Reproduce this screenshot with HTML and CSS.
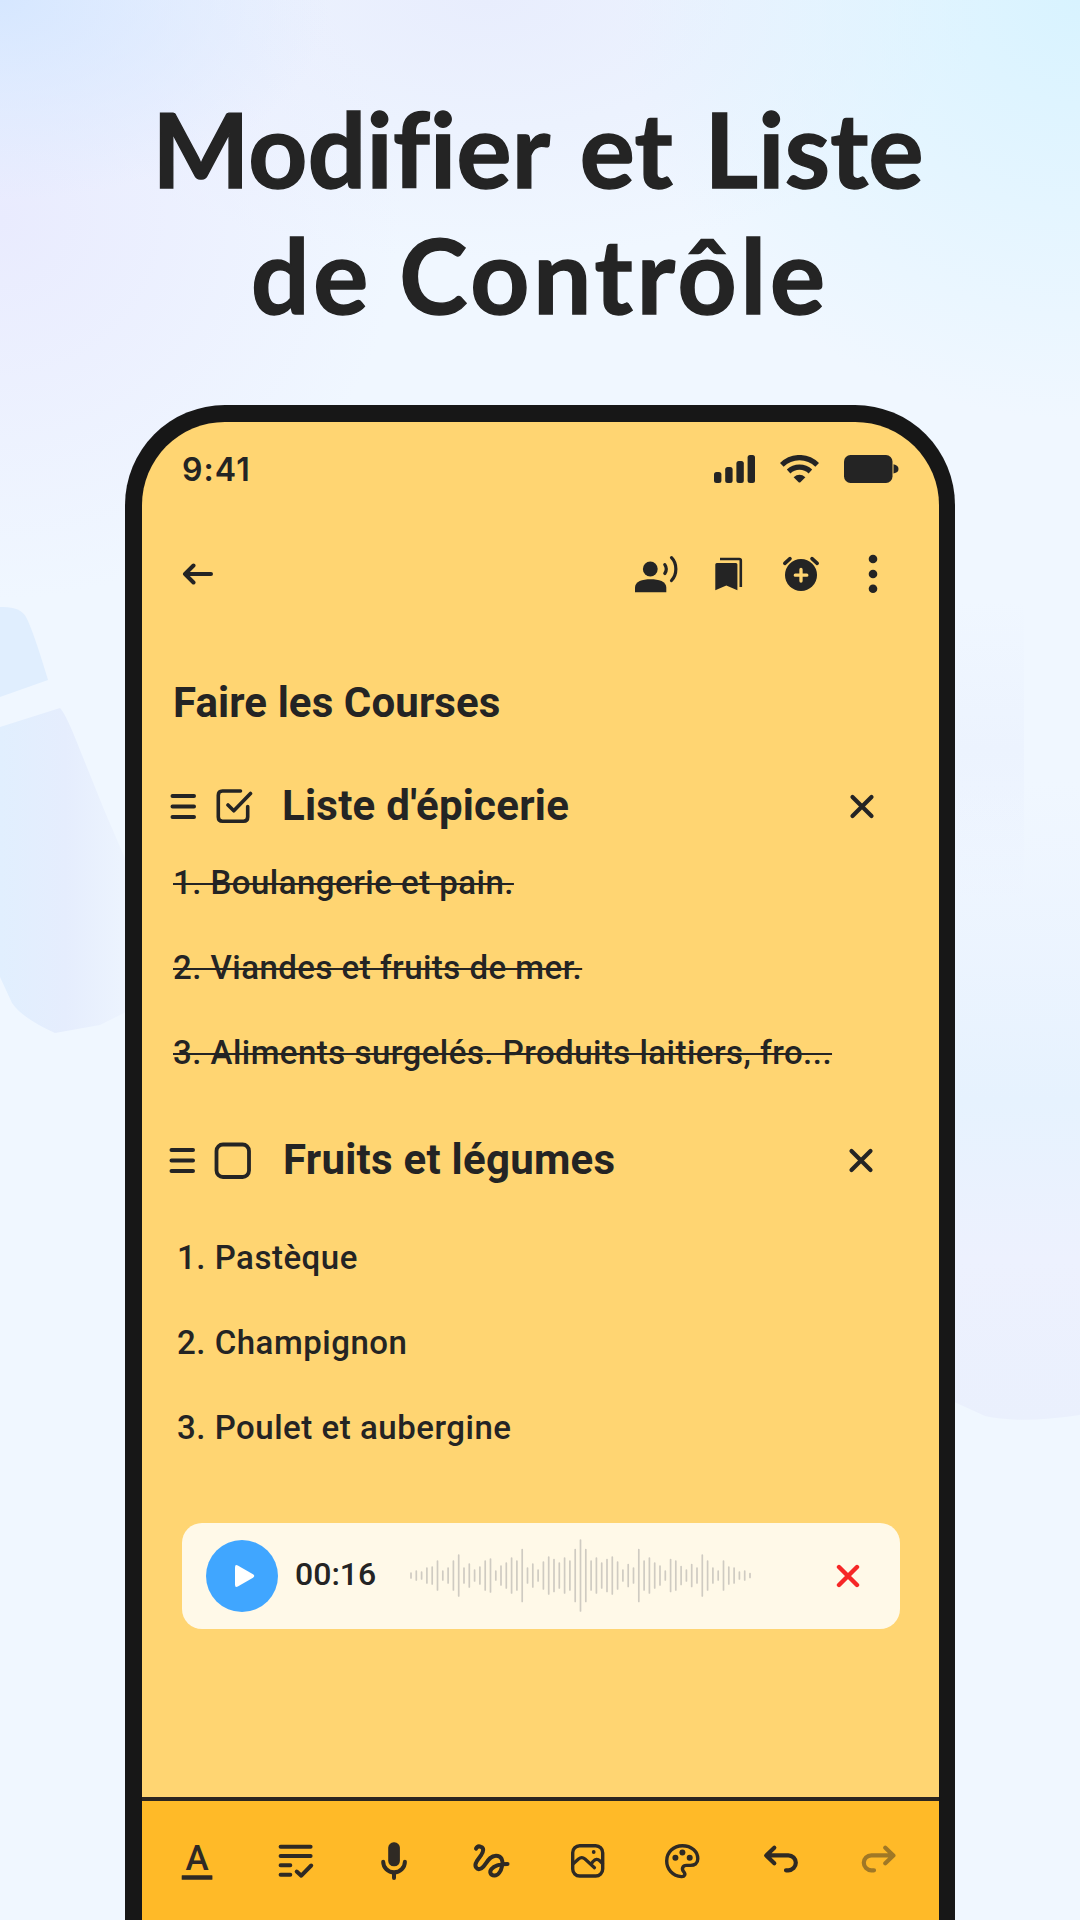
FILE: index.html
```
<!DOCTYPE html>
<html lang="fr">
<head>
  <meta charset="utf-8">
  <title>Modifier et Liste de Contrôle</title>
  <link rel="stylesheet" href="styles.css">
</head>
<body>

<div class="page">
  <svg class="backdrop" viewBox="0 0 1080 1920">
    <defs>
      <linearGradient id="fade-left" x1="0" y1="0" x2="1" y2="0">
        <stop offset="0" stop-color="#e1effe"/>
        <stop offset="0.5" stop-color="#e5edfd"/>
        <stop offset="1" stop-color="#edf4fe"/>
      </linearGradient>
      <linearGradient id="fade-right" x1="0" y1="0" x2="0" y2="1">
        <stop offset="0" stop-color="#eaf1fe" stop-opacity="0"/>
        <stop offset="0.5" stop-color="#e6f2fe"/>
        <stop offset="0.75" stop-color="#edf1fe"/>
        <stop offset="1" stop-color="#eaf0fd"/>
      </linearGradient>
      <linearGradient id="fade-edge" x1="0" y1="0" x2="0" y2="1">
        <stop offset="0" stop-color="#ecf3fe" stop-opacity="0"/>
        <stop offset="0.5" stop-color="#ecf3fe"/>
        <stop offset="1" stop-color="#ecf3fe" stop-opacity="0"/>
      </linearGradient>
    </defs>
    <path fill="#e0eefe" d="M0 607Q20 606 26 617Q33 630 48 680L0 697Z"/>
    <path fill="url(#fade-left)" d="M0 727L60 708Q66 714 80 750L105 812L130 870V1010L100 1025L55 1033Q22 1018 12 1003L0 977Z"/>
    <path fill="url(#fade-edge)" d="M950 600H1024V900H950Z"/>
    <path fill="url(#fade-right)" d="M950 780H1080V1415Q1020 1424 985 1416L950 1400Z"/>
  </svg>

  <h1 class="headline">
    <span class="headline-first">Modifier et Liste</span>
    <span class="headline-second">de Contrôle</span>
  </h1>

  <div class="phone">
    <div class="status-bar">
      <span class="clock">9:41</span>
      <div class="status-icons">
        <svg width="41" height="28" viewBox="0 0 41 28">
          <rect x="0" y="17" width="7.4" height="11" rx="2.5"/>
          <rect x="11.2" y="12" width="7.4" height="16" rx="2.5"/>
          <rect x="22.4" y="6" width="7.4" height="22" rx="2.5"/>
          <rect x="33.6" y="0" width="7.4" height="28" rx="2.5"/>
        </svg>
        <svg width="39" height="28" viewBox="0 0 39 28">
          <path class="line" stroke-width="5.2" d="M1.8 9.9A25 25 0 0 1 37.2 9.9M8.6 16.5A15.8 15.8 0 0 1 30.4 16.5"/>
          <path d="M13.6 22.3Q19.5 17.4 25.4 22.3L20.4 27.2Q19.5 28 18.6 27.2Z"/>
        </svg>
        <svg width="55" height="28" viewBox="0 0 55 28">
          <rect width="48.5" height="28" rx="6.5"/>
          <path d="M49.5 9.3Q54.5 10.3 54.5 14T49.5 18.4Z"/>
        </svg>
      </div>
    </div>

    <div class="toolbar">
      <svg width="32" height="22" viewBox="0 0 32 22">
        <path class="line round" stroke-width="4" d="M29 11H3M11.5 2.5L3 11L11.5 19.5"/>
      </svg>
      <div class="toolbar-actions">
        <svg width="48" height="48" viewBox="0 0 48 48">
          <circle cx="17.3" cy="19" r="7.4"/>
          <path d="M2 42.3V37.5C2 31.5 9.3 29.3 17.6 29.3S33.3 31.5 33.3 37.5V42.3Z"/>
          <path class="line round" stroke-width="3.2" d="M31.8 14.6Q34.8 19 31.8 23.5M38.5 7.7C44.3 13.5 44.3 24.5 38.5 30.5"/>
        </svg>
        <svg width="48" height="48" viewBox="0 0 48 48">
          <path d="M10.3 14.5Q10.3 13 11.8 13H30.9Q32.4 13 32.4 14.5V40.2L21.3 35.4L10.3 40.2Z"/>
          <path class="line" stroke-width="2.6" d="M15 9H34.3Q35.8 9 35.8 10.5V37"/>
        </svg>
        <svg width="48" height="48" viewBox="0 0 48 48">
          <circle cx="24" cy="25" r="16"/>
          <path class="line round" stroke-width="3.6" d="M7.8 13.3L13 8.6M40.2 13.3L35 8.6"/>
          <path class="plus" d="M24 19.5V31M18.3 25.2H29.8"/>
        </svg>
        <svg width="48" height="48" viewBox="0 0 48 48">
          <circle cx="24" cy="9" r="4.3"/>
          <circle cx="24" cy="24" r="4.3"/>
          <circle cx="24" cy="38.8" r="4.3"/>
        </svg>
      </div>
    </div>

    <div class="note">
      <h2 class="note-title">Faire les Courses</h2>

      <div class="section-head">
        <svg width="27" height="28" viewBox="0 0 27 28">
          <path class="line round" stroke-width="4" d="M2.5 4H24M2.5 14.5H24M2.5 25H24"/>
        </svg>
        <svg class="checkbox" width="38" height="38" viewBox="0 0 38 38">
          <path class="line round" stroke-width="3.6" d="M25.5 4H7.5Q3.3 4 3.3 8.2V30Q3.3 34.2 7.5 34.2H28.5Q32.7 34.2 32.7 30V19.5"/>
          <path class="line round" stroke-width="3.6" d="M13 18L18.8 23.8L35.5 6.5"/>
        </svg>
        <h3>Liste d'épicerie</h3>
        <svg class="close" width="26" height="26" viewBox="0 0 26 26">
          <path class="line round" stroke-width="4.2" d="M3.5 4L22.5 23M22.5 4L3.5 23"/>
        </svg>
      </div>
      <ul class="items done">
        <li><span>1. Boulangerie et pain.</span></li>
        <li><span>2. Viandes et fruits de mer.</span></li>
        <li><span>3. Aliments surgelés. Produits laitiers, fro...</span></li>
      </ul>

      <div class="section-head second">
        <svg width="27" height="28" viewBox="0 0 27 28">
          <path class="line round" stroke-width="4" d="M2.5 4H24M2.5 14.5H24M2.5 25H24"/>
        </svg>
        <svg class="checkbox" width="38" height="38" viewBox="0 0 38 38">
          <rect class="line" stroke-width="3.8" x="2.5" y="3.5" width="32.5" height="32.5" rx="6.500"/>
        </svg>
        <h3>Fruits et légumes</h3>
        <svg class="close" width="26" height="26" viewBox="0 0 26 26">
          <path class="line round" stroke-width="4.2" d="M3.5 4L22.5 23M22.5 4L3.5 23"/>
        </svg>
      </div>
      <ul class="items todo">
        <li>1. Pastèque</li>
        <li>2. Champignon</li>
        <li>3. Poulet et aubergine</li>
      </ul>
    </div>

    <div class="audio">
      <div class="play">
        <svg width="24" height="24" viewBox="0 0 24 24">
          <path d="M2 3.2Q2 0 4.8 1.5L20 10.3Q22.5 12 20 13.7L4.8 22.5Q2 24 2 20.8Z"/>
        </svg>
      </div>
      <span class="time">00:16</span>
      <svg class="wave" width="344" height="74" viewBox="0 0 344 74"><path id="wave"/></svg>
      <svg class="remove" width="24" height="24" viewBox="0 0 24 24">
        <path d="M3 3L21 21M21 3L3 21"/>
      </svg>
    </div>

    <div class="bottom-bar">
      <!-- text format -->
      <svg width="48" height="48" viewBox="0 0 48 48">
        <text class="format-letter" x="24" y="33" text-anchor="middle">A</text>
        <rect x="8.7" y="38.3" width="30.7" height="4.5" rx="0.5"/>
      </svg>
      <!-- checklist -->
      <svg width="48" height="48" viewBox="0 0 48 48">
        <path class="line round" stroke-width="4" d="M10.6 9.7H40.6M10.6 19H40.6M10.6 28.3H20.3M10.6 37.7H20.3M26.7 34.5L31.3 38.7L41.2 28.5"/>
      </svg>
      <!-- microphone -->
      <svg width="48" height="48" viewBox="0 0 48 48">
        <rect x="20.2" y="5.3" width="11.7" height="24" rx="5.5"/>
        <path class="line round" stroke-width="4" d="M15.2 24.7A10.85 10.6 0 0 0 36.9 24.7M26 36V41"/>
      </svg>
      <!-- scribble -->
      <svg width="48" height="48" viewBox="0 0 48 48">
        <path class="line round" stroke-width="4" d="M11 11.7C12 9.5 14 9 16 9.8C19.3 11 18.4 14.5 16.3 17.8L11.8 24.2C8.5 29.5 12 33.8 16.5 31.3C21.5 28.5 23 18.8 31 18.8C36.5 18.8 38.3 23.5 37.2 28.5C36 34.5 33 38.8 29.3 38.5C25.3 38.2 24.2 34.8 26.5 32C29.5 28.3 36 27 42.5 27"/>
      </svg>
      <!-- picture -->
      <svg width="48" height="48" viewBox="0 0 48 48">
        <rect class="line" stroke-width="3.4" x="10.7" y="8.7" width="30" height="30.3" rx="7"/>
        <path class="line round" stroke-width="3.2" d="M11 27L16.5 22Q19.8 19.3 23 22L32.5 30.7M29.5 26.5L31 24.5Q34.5 20.5 38 24L40.5 26.5"/>
        <circle cx="31.7" cy="15" r="1.9"/>
      </svg>
      <!-- palette -->
      <svg width="48" height="48" viewBox="0 0 48 48">
        <path class="line" stroke-width="3.4" d="M23.4 8.7C32.5 8.7 38.8 14.5 38.8 21.8C38.8 26.5 35.5 28.4 31.5 28.4H27.5C23.5 28.4 22.3 32 24.8 34.8C27 37.5 25.5 39.8 22.5 39.6C13.5 39 7.7 32 7.7 24C7.7 15.3 14.5 8.7 23.4 8.7Z"/>
        <circle cx="16.4" cy="20.8" r="3"/>
        <circle cx="23.4" cy="15.4" r="3"/>
        <circle cx="30.7" cy="20.8" r="3"/>
      </svg>
      <!-- undo -->
      <svg width="48" height="48" viewBox="0 0 48 48">
        <path class="line round" stroke-width="4.2" d="M17.3 10.8L9.2 18.5L17.3 26.2M10 18.3H31.3A7.5 7.5 0 0 1 31.3 33.3H29"/>
      </svg>
      <!-- redo -->
      <svg class="inactive" width="48" height="48" viewBox="0 0 48 48">
        <path class="line round" stroke-width="4.2" d="M31.3 10.8L39.4 18.5L31.3 26.2M38.6 18.3H17.3A7.5 7.5 0 0 0 17.3 33.3H20"/>
      </svg>
    </div>
  </div>
</div>

<script>
  // Full height of each bar of the recording
  const levels = [5, 9, 7, 15, 17, 29, 9, 15, 29, 41, 15, 23, 11, 17, 29, 33, 9, 19, 25, 35, 29, 52,
    15, 23, 11, 27, 37, 32, 25, 35, 29, 52, 71, 52, 29, 35, 25, 32, 37, 27, 11, 22, 15, 52, 29, 35,
    25, 19, 9, 32, 29, 18, 11, 22, 15, 41, 29, 15, 9, 29, 17, 15, 7, 9, 4];

  // Draw the bars around the middle line
  document.getElementById('wave').setAttribute('d', levels.map((level, i) => {
    const x = (1 + i * 5.297).toFixed(1);
    return `M${x} ${36.5 - level / 2}v${level}`;
  }).join(''));
</script>
</body>
</html>
```

FILE: styles.css
```
body {
  margin: 0;
  font-family: Roboto, sans-serif;
  color: #242424;
}

h1, h2, h3, ul {
  margin: 0;
  padding: 0;
}

svg {
  display: block;
  flex: none;
  fill: #242424;
}

.line {
  fill: none;
  stroke: #242424;
}

.round {
  stroke-linecap: round;
  stroke-linejoin: round;
}

.page {
  position: relative;
  box-sizing: border-box;
  height: 1920px;
  padding-top: 85px;
  overflow: hidden;
  background:
    radial-gradient(ellipse 460px 420px at 100% 0, #d8f3ff, rgba(216, 243, 255, 0)),
    radial-gradient(ellipse 330px 200px at 0 0, #d6e7ff, rgba(214, 231, 255, 0)),
    radial-gradient(ellipse 400px 380px at 0 220px, #e9ebfe, rgba(233, 235, 254, 0)),
    radial-gradient(ellipse 500px 260px at 45% 0, #e8edfd, rgba(232, 237, 253, 0)),
    #f0f7ff;
}

.backdrop {
  position: absolute;
  top: 0;
  left: 0;
  width: 1080px;
  height: 1920px;
}

.headline {
  position: relative;
  font-family: Lato, sans-serif;
  font-size: 103px;
  font-weight: bold;
  line-height: 126px;
  text-align: center;
  font-variant-ligatures: none;
  -webkit-text-stroke: 1.4px #242424;
}

.headline span {
  display: block;
}

.headline-first {
  padding-right: 4px;
  letter-spacing: 0.3px;
  word-spacing: 6px;
}

.headline-second {
  letter-spacing: 3.9px;
  word-spacing: -2px;
}

.phone {
  position: relative;
  box-sizing: border-box;
  display: flex;
  flex-direction: column;
  width: 830px;
  height: 1515px;
  margin: 68px 0 0 125px;
  border: 17px solid #171717;
  border-right-width: 16px;
  border-bottom: none;
  border-radius: 100px 100px 0 0;
  background-color: #ffd572;
}

.status-bar {
  display: flex;
  align-items: center;
  justify-content: space-between;
  height: 94px;
  padding: 0 40px;
}

.clock {
  font-family: Inter, sans-serif;
  font-size: 32px;
  font-weight: 600;
  letter-spacing: 1.1px;
}

.status-icons {
  display: flex;
  gap: 25px;
}

.toolbar {
  display: flex;
  align-items: center;
  justify-content: space-between;
  height: 116px;
  padding: 0 42px 0 40px;
}

.toolbar-actions {
  display: flex;
  gap: 24px;
}

.plus {
  fill: none;
  stroke: #ffd572;
  stroke-width: 3.3px;
  stroke-linecap: round;
}

.note {
  padding: 41px 64px 0 28px;
}

.note-title,
.section-head h3 {
  font-size: 42px;
  font-weight: bold;
  line-height: 60px;
}

.note-title {
  margin-left: 3px;
  margin-bottom: 43px;
  letter-spacing: 0.1px;
}

.section-head {
  display: flex;
  align-items: center;
  height: 60px;
}

.section-head h3 {
  letter-spacing: 0.25px;
}

.checkbox {
  margin: 0 29px 0 18px;
}

.close {
  margin-left: auto;
}

.second {
  margin: 35px 1px 0 -1px;
}

.second .checkbox {
  margin-right: 31px;
}

.items {
  list-style: none;
  font-size: 33px;
  font-weight: 500;
  line-height: 85px;
  letter-spacing: 0.47px;
  white-space: nowrap;
}

.done {
  margin: 4px 0 0 3px;
}

.done span {
  text-decoration: line-through;
  text-decoration-thickness: 2px;
}

.todo {
  margin: 25px 0 0 7px;
  letter-spacing: 0.52px;
}

.audio {
  display: flex;
  align-items: center;
  box-sizing: border-box;
  width: 718px;
  height: 106px;
  margin: 53px 0 0 40px;
  padding: 0 40px 0 24px;
  border-radius: 20px;
  background-color: #fff9e8;
}

.play {
  display: flex;
  align-items: center;
  justify-content: center;
  flex: none;
  width: 72px;
  height: 72px;
  border-radius: 50%;
  background-color: #40a6ff;
}

.play svg {
  margin-left: 6px;
  fill: #fff;
}

.time {
  width: 83px;
  margin: 0 32px 4px 17px;
  font-size: 32px;
  font-weight: 500;
}

.wave {
  stroke: #cfcbc2;
  stroke-width: 1.7px;
  stroke-linecap: round;
}

.remove {
  margin-left: auto;
  stroke: #f62727;
  stroke-width: 4.4px;
  stroke-linecap: round;
}

.bottom-bar {
  display: flex;
  align-items: center;
  justify-content: space-between;
  box-sizing: border-box;
  height: 123px;
  margin-top: auto;
  padding: 0 37px 0 31px;
  border-top: 4px solid #2b2520;
  background-color: #ffba28;
}

.bottom-bar svg {
  fill: #2f2a24;
}

.bottom-bar .line {
  fill: none;
  stroke: #2f2a24;
}

.format-letter {
  font-family: Roboto, sans-serif;
  font-size: 35px;
  font-weight: 500;
}

.inactive {
  opacity: 0.45;
}
```
